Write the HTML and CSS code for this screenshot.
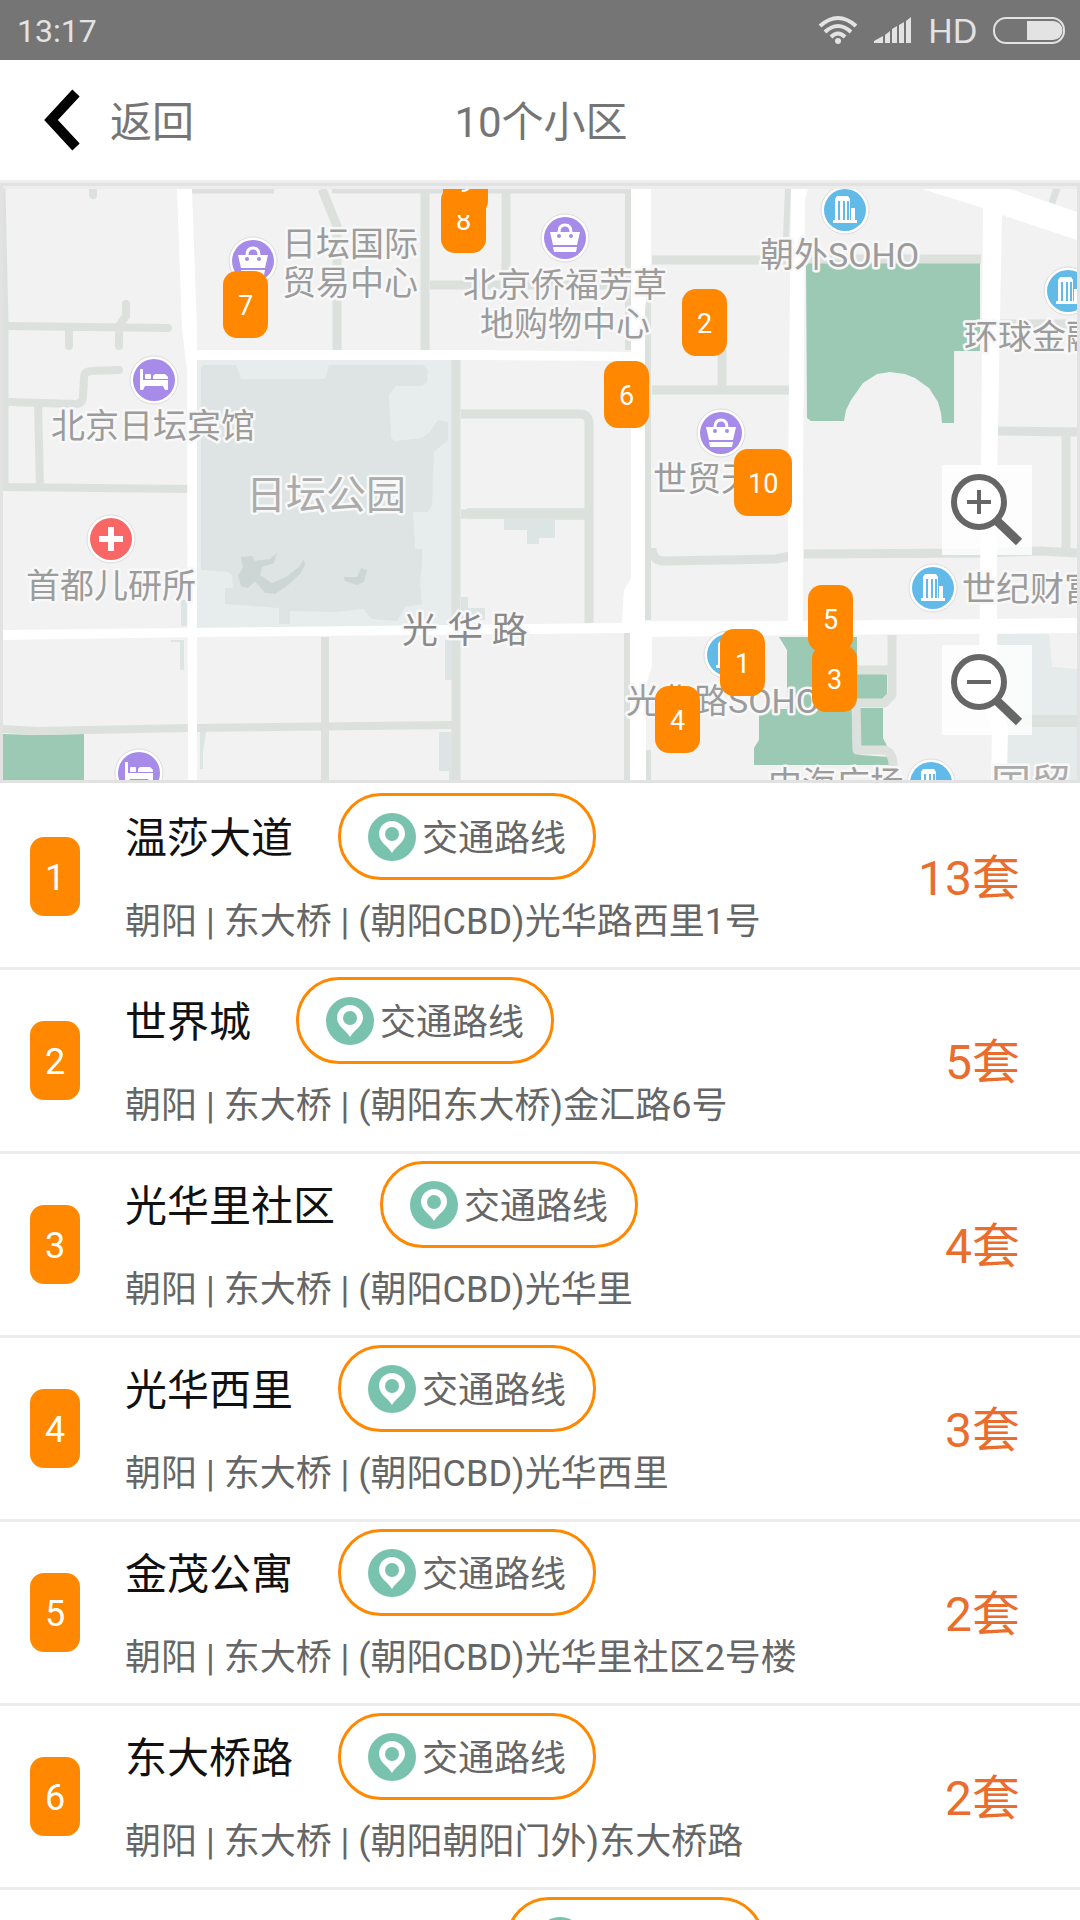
FILE: index.html
```html
<!DOCTYPE html>
<html lang="zh-CN">
<head>
  <meta charset="UTF-8">
  <meta name="viewport" content="width=device-width, initial-scale=1">
  <title>10个小区</title>
  <link rel="stylesheet" href="styles.css">
</head>
<body>

  <div class="status-bar">
    <span class="time">13:17</span>
    <div class="status-icons">
      <svg class="wifi" width="40" height="30" viewBox="0 0 40 30" fill="none" stroke="#e3e3e3" stroke-width="4">
        <path d="M2 11 Q20 -5 38 11"/>
        <path d="M7 17 Q20 5 33 17"/>
        <path d="M13 22 Q20 15 27 22"/>
        <circle cx="20" cy="26" r="3" fill="#e3e3e3" stroke="none"/>
      </svg>
      <svg class="signal" width="38" height="26" viewBox="0 0 38 26" fill="#e3e3e3">
        <path d="M0 26 V24 L9 19 V26Z M11 26 V18 L16 14 V26Z M18 26 V12 L23 9 V26Z M25 26 V8 L30 5 V26Z M32 26 V4 L37 0 V26Z"/>
      </svg>
      <span class="hd">HD</span>
      <svg class="battery" width="72" height="27" viewBox="0 0 72 27">
        <rect x="1" y="1" width="70" height="25" rx="12" fill="none" stroke="#e3e3e3" stroke-width="2"/>
        <path d="M34 4 H60 A9 9 0 0 1 60 23 H34Z" fill="#e3e3e3"/>
      </svg>
    </div>
  </div>

  <header class="header">
    <button class="back">
      <svg width="38" height="62" viewBox="0 0 38 62" fill="none" stroke="#000" stroke-width="10">
        <path d="M34 4 L9 31 L34 58"/>
      </svg>
      <span>返回</span>
    </button>
    <h1>10个小区</h1>
  </header>

  <section class="map">
    <div class="map-canvas">
      <svg class="map-tiles" viewBox="3 189 1074 591" preserveAspectRatio="xMinYMin slice">
        <defs>
          <g id="bag">
            <circle r="24" fill="#fff" stroke="#dcdcdc"/>
            <circle r="21" fill="#a78be8"/>
            <path d="M-15 -6 H15 L12 7 H-12Z M-12 9 H12 L11 14 H-11Z" fill="#fff"/>
            <path d="M-6 -6 Q-6 -13 0 -13 Q6 -13 6 -6" fill="none" stroke="#fff" stroke-width="3"/>
            <circle cx="-6" cy="-2" r="2" fill="#a78be8"/>
            <circle cx="6" cy="-2" r="2" fill="#a78be8"/>
          </g>
          <g id="bed">
            <circle r="24" fill="#fff" stroke="#dcdcdc"/>
            <circle r="21" fill="#a78be8"/>
            <path d="M-14 -11 H-11 V0 H14 V10 H11 L9 6 H-9 L-11 10 H-14Z" fill="#fff"/>
            <rect x="-9" y="-6" width="6" height="5" rx="1" fill="#fff"/>
            <path d="M-1 -1 V-4 L1 -6 H11 L14 -3 V-1Z" fill="#fff"/>
          </g>
          <g id="tower">
            <circle r="24" fill="#fff" stroke="#dcdcdc"/>
            <circle r="21" fill="#62bae8"/>
            <path d="M-12 10 H-10 V-11 L-8 -14 H3 L5 -11 V10 H6 V-2 H10 V10 H12 V13 H-12Z" fill="#fff"/>
            <path d="M-6 -9 V10 M-1 -9 V10 M3 -9 V10" stroke="#62bae8" stroke-width="2"/>
          </g>
          <g id="hospital">
            <circle r="24" fill="#fff" stroke="#dcdcdc"/>
            <circle r="21" fill="#f86666"/>
            <path d="M-12 0 H12 M0 -12 V12" stroke="#fff" stroke-width="6"/>
          </g>
        </defs>

        <rect x="3" y="189" width="1074" height="591" fill="#f1f2f1"/>

        <!-- park -->
        <path d="M197 360 H453 V628 H197Z" fill="#e7edec"/>
        <path d="M201 368 L203 365 H236 L241 379 H325 L329 365 H423 L428 370 L427 382 L422 386 H396 L389 395 L391 438 L395 441 L422 438 L430 432 L438 420 L448 422 V440 L434 452 L432 505 L428 512 H413 L415 549 H422 V565 L420 582 L422 604 L405 607 L397 621 L372 619 L363 609 L335 612 L290 611 V624 H279 V608 L225 604 V588 H233 L232 575 L228 572 L201 570Z" fill="#dde4e3"/>
        <path d="M241 557 L252 556 L255 561 L270 559 L277 553 L274 563 L262 567 L260 575 L272 583 L286 577 L299 567 L304 559 L305 565 L300 574 L288 585 L275 594 L265 593 L255 581 L248 588 L241 586 L238 576 L243 568Z" fill="#ccd6d5"/>
        <path d="M344 577 L357 577 L361 568 L367 570 L364 582 L357 585 L345 581Z" fill="#ccd6d5"/>

        <!-- blocks -->
        <path d="M467 508 H585 V520 H555 V538 H539 V544 H527 V530 H504 V519 H467Z M461 597 H468 V608 H485 V620 H461Z M445 640 H452 V680 H445Z M439 732 H452 V780 H449 V771 H439Z M181 600 H187 V626 H181Z M171 640 H184 V670 H180 V642 H171Z M200 732 H206 L203 752 V769 H200Z" fill="#dde4e4"/>
        <path d="M997 634 H1049 L1052 667 L1077 669 V780 H1007Z" fill="#e5eaea"/>

        <!-- green areas -->
        <g fill="#9bc9b3">
          <path d="M806 263 H980 V351 H954 V423 H942 L941 413 L938 402 L929 388 L915 378 L905 374 L890 372 L877 374 L863 383 L851 400 L846 410 L844 421 H811 L807 418Z"/>
          <path d="M3 734 L35 735 L84 734 V780 H3Z"/>
          <path d="M779 637 H857 V665 L887 675 V696 L882 700 H855 L852 712 L853 750 L860 755 L889 757 V765 H754 V748 L759 740 V709 H787 V650Z"/>
          <path d="M859 708 H883 V738 L887 746 H859Z"/>
        </g>

        <!-- small roads -->
        <g fill="none" stroke="#dce1de" stroke-width="9" stroke-linejoin="round">
          <path d="M1 189 L4 325 V488"/>
          <path d="M93 185 V195 M6 326 L168 328 M69 328 V346 M119 328 V346 M126 304 V316 L119 326 M119 370 L92 371 Q84 371 84 378 L83 396 Q83 404 75 404 L8 402" stroke-width="8" stroke-linecap="round"/>
          <path d="M38 404 L40 486 M3 487 L188 489" stroke-width="8"/>
          <path d="M192 189 H274 M332 189 H631"/>
          <path d="M322 189 L337 226 V350 M425 189 V350 M506 189 V285 M430 285 H628"/>
          <path d="M628 189 V350 M648 290 V620" stroke-width="6"/>
          <path d="M652 260 H790 M804 259 H981 M652 390 H790 M722 350 V390"/>
          <path d="M788 189 L786 237" stroke-width="6"/>
          <path d="M1058 185 L1052 203" stroke-width="7"/>
          <path d="M998 324 H1077 M998 431 L1077 432 M1066 432 V550"/>
          <path d="M804 554 L985 553 L1040 551 L1077 553 M652 548 Q652 561 664 561 L776 559 L790 556"/>
          <path d="M456 360 V780 M461 414 H580 Q589 414 589 424 V623 M461 514 H589"/>
          <path d="M3 729 L38 731 L188 728 M197 728 L452 725 M325 637 V780" stroke-width="8"/>
          <path d="M627 633 V780 M648 750 V780" stroke-width="6"/>
          <path d="M892 635 V695 L884 703 H856 L857 750 H884 Q893 752 893 765 V780 M855 670 H892"/>
          <path d="M1008 721 H1077" stroke-width="12"/>
        </g>

        <!-- main roads -->
        <g fill="#fff">
          <path d="M177 189 H192 L197 330 V780 H188 L187 370 L182 330Z"/>
          <path d="M196 350 H480 L631 352 V361 L480 360 H196Z"/>
          <path d="M631 189 H651 V260 L645 310 V621 L652 636 V667 L646 685 V750 V780 H630 V633 L622 623 L624 590 L631 578Z"/>
          <path d="M791 189 H808 L805 200 L803 480 V625 H788 V480Z"/>
          <path d="M922 189 H1010 L1077 212 V240 L1002 215 L997 480 V700 L1008 726 L1007 780 H991 L992 730 L979 700 L981 480 L983 208Z"/>
          <path d="M3 630 L188 628 L360 626 L622 623 L645 621 H790 L980 619 L1077 618 V633 L800 635 L652 637 L630 633 L197 637 L3 640Z"/>
        </g>

        <use href="#bag" x="253" y="261"/>
        <use href="#bag" x="565" y="238"/>
        <use href="#bag" x="721" y="433"/>
        <use href="#bed" x="154" y="380"/>
        <use href="#bed" x="139" y="773"/>
        <use href="#hospital" x="111" y="539"/>
        <use href="#tower" x="845" y="210"/>
        <use href="#tower" x="1068" y="291"/>
        <use href="#tower" x="933" y="588"/>
        <use href="#tower" x="931" y="783"/>
        <use href="#tower" x="728" y="655"/>

        <g class="place">
          <text x="282" y="256">日坛国际</text>
          <text x="282" y="295">贸易中心</text>
          <text x="463" y="297">北京侨福芳草</text>
          <text x="480" y="336">地购物中心</text>
          <text x="760" y="267">朝外SOHO</text>
          <text x="964" y="349">环球金融</text>
          <text x="51" y="438">北京日坛宾馆</text>
          <text x="653" y="491">世贸天</text>
          <text x="26" y="598">首都儿研所</text>
          <text x="962" y="601">世纪财富</text>
          <text x="626" y="713">光华路SOHO</text>
          <text x="768" y="796">中海广场</text>
          <text class="place-big" x="246" y="509">日坛公园</text>
          <text class="place-big" x="991" y="798">国贸</text>
          <text class="place-road" x="402" y="643">光 华 路</text>
        </g>
      </svg>

      <button class="pin pin-7">7</button>
      <button class="pin pin-8">8</button>
      <button class="pin pin-9">9</button>
      <button class="pin pin-2">2</button>
      <button class="pin pin-6">6</button>
      <button class="pin pin-10">10</button>
      <button class="pin pin-5">5</button>
      <button class="pin pin-3">3</button>
      <button class="pin pin-1">1</button>
      <button class="pin pin-4">4</button>

      <div class="zoom">
        <button aria-label="放大">
          <svg width="90" height="90" viewBox="0 0 90 90" fill="none" stroke="#666">
            <circle cx="37" cy="37" r="25" fill="#fff" stroke-width="6"/>
            <path d="M54 55 L77 77" stroke-width="9"/>
            <path d="M25 37 H49 M37 25 V49" stroke-width="4"/>
          </svg>
        </button>
        <button aria-label="缩小">
          <svg width="90" height="90" viewBox="0 0 90 90" fill="none" stroke="#666">
            <circle cx="37" cy="37" r="25" fill="#fff" stroke-width="6"/>
            <path d="M54 55 L77 77" stroke-width="9"/>
            <path d="M25 37 H49" stroke-width="4"/>
          </svg>
        </button>
      </div>
    </div>
  </section>

  <svg class="symbols" width="0" height="0">
    <symbol id="route" viewBox="0 0 48 48">
      <circle cx="24" cy="24" r="24" fill="#78c2ae"/>
      <path d="M24 40 C20 33 11 29 11 21 A13 13 0 0 1 37 21 C37 29 28 33 24 40Z" fill="#fff"/>
      <circle cx="24" cy="21" r="7" fill="#78c2ae"/>
    </symbol>
  </svg>

  <ul class="list">
    <li class="item">
      <span class="num">1</span>
      <div class="info">
        <div class="name-row">
          <h2>温莎大道</h2>
          <button class="route"><svg><use href="#route"/></svg><span>交通路线</span></button>
        </div>
        <p>朝阳 | 东大桥 | (朝阳CBD)光华路西里1号</p>
      </div>
      <span class="count">13套</span>
    </li>
    <li class="item">
      <span class="num">2</span>
      <div class="info">
        <div class="name-row">
          <h2>世界城</h2>
          <button class="route"><svg><use href="#route"/></svg><span>交通路线</span></button>
        </div>
        <p>朝阳 | 东大桥 | (朝阳东大桥)金汇路6号</p>
      </div>
      <span class="count">5套</span>
    </li>
    <li class="item">
      <span class="num">3</span>
      <div class="info">
        <div class="name-row">
          <h2>光华里社区</h2>
          <button class="route"><svg><use href="#route"/></svg><span>交通路线</span></button>
        </div>
        <p>朝阳 | 东大桥 | (朝阳CBD)光华里</p>
      </div>
      <span class="count">4套</span>
    </li>
    <li class="item">
      <span class="num">4</span>
      <div class="info">
        <div class="name-row">
          <h2>光华西里</h2>
          <button class="route"><svg><use href="#route"/></svg><span>交通路线</span></button>
        </div>
        <p>朝阳 | 东大桥 | (朝阳CBD)光华西里</p>
      </div>
      <span class="count">3套</span>
    </li>
    <li class="item">
      <span class="num">5</span>
      <div class="info">
        <div class="name-row">
          <h2>金茂公寓</h2>
          <button class="route"><svg><use href="#route"/></svg><span>交通路线</span></button>
        </div>
        <p>朝阳 | 东大桥 | (朝阳CBD)光华里社区2号楼</p>
      </div>
      <span class="count">2套</span>
    </li>
    <li class="item">
      <span class="num">6</span>
      <div class="info">
        <div class="name-row">
          <h2>东大桥路</h2>
          <button class="route"><svg><use href="#route"/></svg><span>交通路线</span></button>
        </div>
        <p>朝阳 | 东大桥 | (朝阳朝阳门外)东大桥路</p>
      </div>
      <span class="count">2套</span>
    </li>
    <li class="item">
      <span class="num"></span>
      <div class="info">
        <div class="name-row">
          <div class="name-empty"></div>
          <button class="route" aria-label="交通路线"><svg><use href="#route"/></svg></button>
        </div>
      </div>
    </li>
  </ul>

</body>
</html>
```

FILE: styles.css
```css
* {
  box-sizing: border-box;
}
body {
  margin: 0;
  height: 100vh;
  overflow: hidden;
  background-color: #fff;
  color: #666;
  font-family: Roboto, "Noto Sans CJK SC", sans-serif;
  font-size: 36px;
}
button {
  border: none;
  padding: 0;
  background: none;
  color: inherit;
  font: inherit;
  cursor: pointer;
}
h1, h2, p, ul {
  margin: 0;
  padding: 0;
  font-weight: normal;
}
svg {
  display: block;
}
.status-bar {
  display: flex;
  align-items: center;
  justify-content: space-between;
  height: 60px;
  padding: 0 15px 0 17px;
  background-color: #757575;
  color: #e3e3e3;
  font-size: 32px;
}
.time {
  padding-top: 2px;
}
.status-icons {
  display: flex;
  align-items: center;
  gap: 16px;
}
.hd {
  font-family: Lato, sans-serif;
}
.header {
  display: grid;
  grid-template-columns: 1fr auto 1fr;
  align-items: center;
  height: 123px;
  padding: 0 40px 0 42px;
  border-bottom: 3px solid #ededed;
  color: #757575;
}
.back {
  display: flex;
  align-items: center;
  justify-self: start;
  gap: 30px;
  font-size: 42px;
}
h1 {
  font-size: 42px;
}
h1, h2, .back span, .route span {
  padding-bottom: 4px;
}

/* map */
.map {
  padding-top: 3px;
  border: 3px solid #e2e2e2;
  background-color: #ededed;
}
.map-canvas {
  position: relative;
  height: 591px;
  overflow: hidden;
}
.map-tiles {
  width: 100%;
  height: 100%;
}
.place {
  font-size: 34px;
  fill: #9c9c9c;
  stroke: #f8f8f8;
  stroke-width: 5px;
  stroke-linejoin: round;
  paint-order: stroke;
}
.place-big {
  font-size: 40px;
  fill: #ababab;
}
.place-road {
  font-size: 36px;
  fill: #8a8a8a;
}
.pin {
  position: absolute;
  min-width: 45px;
  height: 67px;
  padding: 2px 14px 0;
  border-radius: 14px;
  background-color: #ff8800;
  color: #fff;
  font-size: 27px;
}
.pin-1 { left: 717px; top: 440px; }
.pin-2 { left: 679px; top: 100px; }
.pin-3 { left: 809px; top: 456px; }
.pin-4 { left: 652px; top: 497px; }
.pin-5 { left: 805px; top: 396px; }
.pin-6 { left: 601px; top: 172px; }
.pin-7 { left: 220px; top: 82px; }
.pin-8 { left: 438px; top: -3px; }
.pin-9 { left: 440px; top: -41px; }
.pin-10 { left: 731px; top: 260px; }
.zoom {
  position: absolute;
  right: 45px;
  bottom: 45px;
  display: flex;
  flex-direction: column;
  gap: 90px;
}
.zoom button {
  background-color: rgba(255, 255, 255, 0.8);
}

/* list */
.symbols {
  position: absolute;
}
.list {
  padding-top: 3px;
  list-style: none;
}
.item {
  display: grid;
  grid-template-columns: 50px 1fr auto;
  align-items: center;
  gap: 45px;
  height: 184px;
  padding: 0 60px 0 30px;
  border-bottom: 3px solid #ededed;
}
.num {
  height: 79px;
  padding-top: 2px;
  border-radius: 14px;
  background-color: #ff8800;
  color: #fff;
  line-height: 79px;
  text-align: center;
}
.info {
  align-self: start;
  padding-top: 7px;
}
.name-row {
  display: flex;
  align-items: center;
  gap: 45px;
}
h2 {
  color: #111;
  font-size: 42px;
}
.name-empty {
  width: 336px;
}
.route {
  display: flex;
  align-items: center;
  gap: 6px;
  min-width: 258px;
  height: 87px;
  padding: 0 27px;
  border: 3px solid #ff8800;
  border-radius: 43px;
}
.route svg {
  width: 48px;
  height: 48px;
}
.info p {
  margin-top: 16px;
  line-height: 52px;
  white-space: nowrap;
}
.count {
  padding-bottom: 5px;
  color: #e96e2e;
  font-size: 48px;
}
```
